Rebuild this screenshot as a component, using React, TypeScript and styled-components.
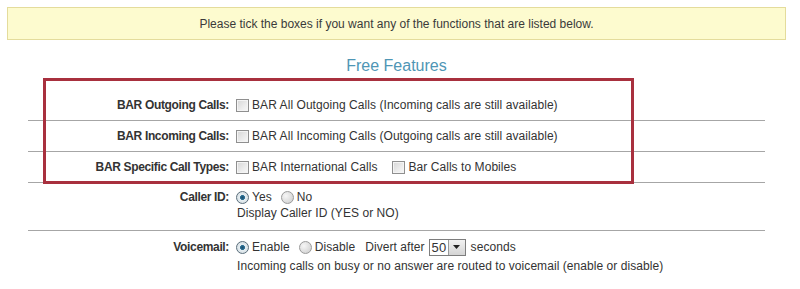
import styled, { createGlobalStyle } from 'styled-components';

const GlobalStyle = createGlobalStyle`
  body {
    margin: 0;
    background: #fff;
    font-family: "Liberation Sans", Arial, sans-serif;
    font-size: 12px;
    color: #333;
  }
`;

const Page = styled.div`
  position: relative;
  width: 800px;
  height: 289px;
  box-sizing: border-box;
  padding: 7px 14px 0 7px;
  overflow: hidden;
`;

const Notice = styled.div`
  height: 31px;
  display: flex;
  align-items: center;
  justify-content: center;
  background: #fdfbcf;
  border: 1px solid #e4dc9c;
  color: #3a3a3a;
`;

const Heading = styled.h2`
  margin: 16px 0 0;
  font-size: 16px;
  font-weight: normal;
  line-height: 20px;
  text-align: center;
  color: #4f96b5;
`;

const Table = styled.div`
  margin: 14px 21px 0;
`;

const Row = styled.div<{ $top?: number; $bottom?: number }>`
  display: grid;
  grid-template-columns: 201px 1fr;
  padding: ${(p) => p.$top ?? 7}px 0 ${(p) => p.$bottom ?? 7}px;
  border-bottom: 1px solid #a6a6a6;
  line-height: 16px;

  &:last-child {
    border-bottom: none;
  }
`;

const Label = styled.div<{ $height?: number }>`
  text-align: right;
  font-weight: bold;
  letter-spacing: -0.35px;
  line-height: ${(p) => p.$height ?? 16}px;
  color: #333;
`;

const Value = styled.div`
  padding-left: 4px;
  letter-spacing: 0.06px;
`;

const Line = styled.div<{ $height?: number }>`
  display: flex;
  align-items: center;
  height: ${(p) => p.$height ?? 16}px;
  white-space: nowrap;
`;

const Option = styled.label<{ $gap?: number }>`
  display: inline-flex;
  align-items: center;
  margin-right: ${(p) => p.$gap ?? 6}px;
`;

const Check = styled.input.attrs({ type: 'checkbox' })`
  appearance: none;
  width: 13px;
  height: 13px;
  margin: 0 3px;
  box-sizing: border-box;
  border: 1px solid #8f8f8f;
  background: linear-gradient(135deg, #d6d6d6 0%, #ececec 60%, #f8f8f8 100%);
  box-shadow: inset 0 0 0 1px #f4f4f4;
`;

const Radio = styled.input.attrs({ type: 'radio' })`
  appearance: none;
  width: 13px;
  height: 13px;
  margin: 0 3px;
  box-sizing: border-box;
  border-radius: 50%;
  border: 1px solid #9a9a9a;
  background: radial-gradient(circle at 35% 35%, #f6f6f6 0%, #d8d8d8 70%, #c8c8c8 100%);

  &:checked {
    border-color: #5b6f7c;
    background: radial-gradient(circle, #1c4f6e 0%, #2c6e93 28%, #e6eef2 36%, #cfd8dd 100%);
  }
`;

const Select = styled.span`
  display: inline-flex;
  align-items: stretch;
  width: 37px;
  height: 17px;
  margin: 0 5px 0 4px;
  box-sizing: border-box;
  border: 1px solid #7d7d7d;
  background: #fff;
`;

const SelectValue = styled.span`
  flex: 1;
  padding-left: 2px;
  font-size: 13px;
  line-height: 15px;
`;

const SelectButton = styled.span`
  width: 16px;
  display: flex;
  align-items: center;
  justify-content: center;
  border-left: 1px solid #9a9a9a;
  background: linear-gradient(#f2f2f2, #d4d4d4);
`;

const Spacer = styled.span`
  display: inline-block;
  width: 4px;
`;

const Highlight = styled.div`
  position: absolute;
  left: 43px;
  top: 78px;
  width: 591px;
  height: 106px;
  box-sizing: border-box;
  border: 3px solid #a8303e;
  pointer-events: none;
`;

function App() {
  return (
    <Page>
      <GlobalStyle />
      <Notice>Please tick the boxes if you want any of the functions that are listed below.</Notice>
      <Heading>Free Features</Heading>
      <Table>
        <Row>
          <Label>BAR Outgoing Calls:</Label>
          <Value>
            <Line>
              <Option>
                <Check />
                BAR All Outgoing Calls (Incoming calls are still available)
              </Option>
            </Line>
          </Value>
        </Row>
        <Row>
          <Label>BAR Incoming Calls:</Label>
          <Value>
            <Line>
              <Option>
                <Check />
                BAR All Incoming Calls (Outgoing calls are still available)
              </Option>
            </Line>
          </Value>
        </Row>
        <Row>
          <Label>BAR Specific Call Types:</Label>
          <Value>
            <Line>
              <Option $gap={12}>
                <Check />
                BAR International Calls
              </Option>
              <Option>
                <Check />
                Bar Calls to Mobiles
              </Option>
            </Line>
          </Value>
        </Row>
        <Row $top={6} $bottom={9}>
          <Label>Caller ID:</Label>
          <Value>
            <Line>
              <Option>
                <Radio name="callerid" defaultChecked />
                Yes
              </Option>
              <Option>
                <Radio name="callerid" />
                No
              </Option>
            </Line>
            <Line>
              <Spacer />
              Display Caller ID (YES or NO)
            </Line>
          </Value>
        </Row>
        <Row $top={6}>
          <Label $height={20}>Voicemail:</Label>
          <Value>
            <Line $height={20}>
              <Option>
                <Radio name="voicemail" defaultChecked />
                Enable
              </Option>
              <Option $gap={10}>
                <Radio name="voicemail" />
                Disable
              </Option>
              Divert after
              <Select>
                <SelectValue>50</SelectValue>
                <SelectButton>
                  <svg width="7" height="4" viewBox="0 0 7 4">
                    <path d="M0 0 H7 L3.5 4 Z" fill="#222" />
                  </svg>
                </SelectButton>
              </Select>
              seconds
            </Line>
            <Line $height={17}>
              <Spacer />
              Incoming calls on busy or no answer are routed to voicemail (enable or disable)
            </Line>
          </Value>
        </Row>
      </Table>
      <Highlight />
    </Page>
  );
}

export default App;
